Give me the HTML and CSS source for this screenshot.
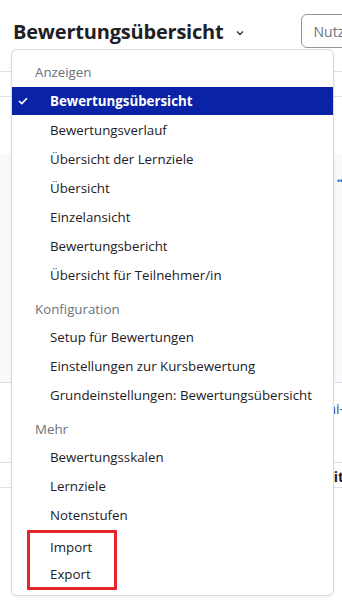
FILE: index.html
```html
<!DOCTYPE html>
<html lang="de">
  <head>
    <meta charset="UTF-8" />
    <meta name="viewport" content="width=device-width, initial-scale=1.0" />
    <title>Bewertungsübersicht</title>
    <link rel="stylesheet" href="styles.css">
  </head>
  <body>
    <div class="page">
      <div class="topbar">
        <button class="title-btn">
          <span class="title">Bewertungsübersicht</span>
          <svg class="chev" width="8" height="6" viewBox="0 0 8 6"><path d="M1 1.5 L4 4.5 L7 1.5" fill="none" stroke="#333" stroke-width="1.3"/></svg>
        </button>
        <div class="sep"></div>
        <input class="search" type="text" placeholder="Nutzer/in suchen">
      </div>

      <!-- Inhalt hinter dem Menü -->
      <div class="tabs"></div>
      <div class="row-line"></div>
      <div class="grid-area">
        <span class="dots">••</span>
      </div>
      <div class="cell-row"><span class="link-frag">ni-</span></div>
      <div class="cell-row bold-row"><span class="bold-frag">it</span></div>

      <div class="menu">
        <div class="menu-header">Anzeigen</div>
        <a class="menu-item active" href="#">
          <svg class="check" width="10" height="8" viewBox="0 0 10 8"><path d="M1 4 L3.8 6.6 L9 1.2" fill="none" stroke="#fff" stroke-width="1.6"/></svg>
          Bewertungsübersicht
        </a>
        <a class="menu-item" href="#">Bewertungsverlauf</a>
        <a class="menu-item" href="#">Übersicht der Lernziele</a>
        <a class="menu-item" href="#">Übersicht</a>
        <a class="menu-item" href="#">Einzelansicht</a>
        <a class="menu-item" href="#">Bewertungsbericht</a>
        <a class="menu-item" href="#">Übersicht für Teilnehmer/in</a>

        <div class="menu-header">Konfiguration</div>
        <a class="menu-item" href="#">Setup für Bewertungen</a>
        <a class="menu-item" href="#">Einstellungen zur Kursbewertung</a>
        <a class="menu-item" href="#">Grundeinstellungen: Bewertungsübersicht</a>

        <div class="menu-header">Mehr</div>
        <a class="menu-item" href="#">Bewertungsskalen</a>
        <a class="menu-item" href="#">Lernziele</a>
        <a class="menu-item" href="#">Notenstufen</a>
        <div class="highlight">
          <a class="menu-item" href="#">Import</a>
          <a class="menu-item" href="#">Export</a>
        </div>
      </div>
    </div>
  </body>
</html>
```

FILE: styles.css
```css
body {
  font-family: "Open Sans", "Noto Sans", "Liberation Sans", sans-serif;
  background-color: #fff;
  color: #1d2125;
  margin: 0;
  padding: 0;
}

.page {
  position: relative;
  width: 342px;
  height: 600px;
  overflow: hidden;
}

.topbar {
  display: flex;
  align-items: center;
  height: 34px;
  padding-top: 14px;
}

.title-btn {
  display: flex;
  align-items: center;
  gap: 12px;
  background: none;
  border: none;
  padding: 0 0 0 13px;
  margin: 0;
  font-family: inherit;
  cursor: pointer;
}

.title {
  font-size: 20px;
  font-weight: 700;
  color: #1d2125;
  letter-spacing: -0.2px;
}

.chev {
  margin-top: 3px;
}

.sep {
  width: 1px;
  height: 34px;
  background-color: #e3e5e8;
  margin-left: 29px;
}

.search {
  box-sizing: border-box;
  width: 120px;
  height: 34px;
  margin-left: 28px;
  border: 1px solid #8f959e;
  border-radius: 6px;
  padding: 0 12px;
  font-family: inherit;
  font-size: 14px;
  color: #495057;
}

.search::placeholder {
  color: #6a737b;
}

.tabs {
  margin-top: 23px;
  border-top: 1px solid #dee2e6;
  height: 24px;
}

.row-line {
  border-top: 1px solid #dee2e6;
  height: 57px;
}

.grid-area {
  height: 228px;
  background-color: #f8f9fa;
  border-bottom: 1px solid #dee2e6;
  position: relative;
}

.dots {
  position: absolute;
  right: 0;
  top: 20px;
  color: #0f6cbf;
  font-size: 10px;
  letter-spacing: -1px;
}

.cell-row {
  height: 79px;
  border-bottom: 1px solid #dee2e6;
  text-align: right;
  font-size: 14px;
}

.link-frag {
  display: inline-block;
  margin-top: 16px;
  margin-right: -2px;
  color: #1f4fa3;
}

.bold-row {
  height: 24px;
}

.bold-frag {
  display: inline-block;
  margin-top: 4px;
  font-weight: 700;
  margin-right: -2px;
}

.menu {
  position: absolute;
  left: 11px;
  top: 49px;
  width: 323px;
  box-sizing: border-box;
  background-color: #fff;
  border: 1px solid #d8dbdf;
  border-radius: 6px;
  box-shadow: 0 1px 3px rgba(0, 0, 0, 0.08);
  padding: 8px 0 5px;
}

.menu-header {
  font-size: 13.3px;
  color: #6a737b;
  padding: 10px 23px 3px;
  line-height: 20px;
}

.menu-header:first-child {
  padding-top: 4px;
  padding-bottom: 5px;
}

.menu-item {
  display: flex;
  align-items: center;
  position: relative;
  height: 29px;
  padding-left: 38px;
  font-size: 13.3px;
  color: #1d2125;
  text-decoration: none;
}

.menu-item.active {
  background-color: #0a22a5;
  color: #fff;
  font-weight: 700;
  height: 28px;
}

.check {
  position: absolute;
  left: 6px;
  top: 10px;
}

.highlight {
  margin: 1px 0 0 15px;
  width: 90px;
  border: 3px solid #e4252a;
  box-sizing: border-box;
}

.highlight .menu-item {
  height: 27px;
  padding-left: 20px;
}
```
